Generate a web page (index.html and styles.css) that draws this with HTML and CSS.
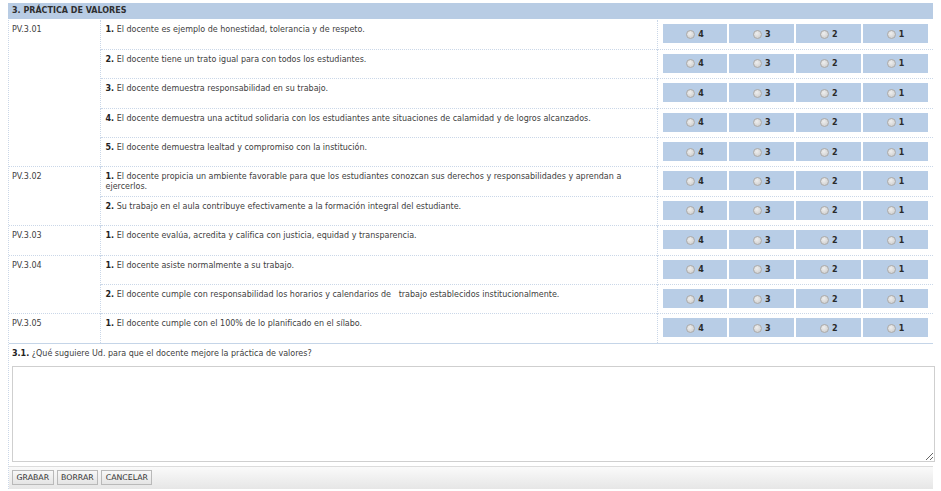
FILE: index.html
```html
<!DOCTYPE html>
<html lang="es">
<head>
<meta charset="utf-8">
<title>Práctica de valores</title>
<link rel="stylesheet" href="styles.css">
</head>
<body>
<div class="panel">
  <div class="head">3. PRÁCTICA DE VALORES</div>
  <table class="grid">
    <colgroup><col class="c-code"><col class="c-q"><col class="c-r"></colgroup>
    <tbody>
      <tr class="grp"><td class="code" rowspan="5">PV.3.01</td><td class="q"><b>1.</b> El docente es ejemplo de honestidad, tolerancia y de respeto.</td><td class="r"><div class="opts"><span class="opt"><i></i>4</span><span class="opt"><i></i>3</span><span class="opt"><i></i>2</span><span class="opt"><i></i>1</span></div></td></tr>
      <tr><td class="q"><b>2.</b> El docente tiene un trato igual para con todos los estudiantes.</td><td class="r"><div class="opts"><span class="opt"><i></i>4</span><span class="opt"><i></i>3</span><span class="opt"><i></i>2</span><span class="opt"><i></i>1</span></div></td></tr>
      <tr><td class="q"><b>3.</b> El docente demuestra responsabilidad en su trabajo.</td><td class="r"><div class="opts"><span class="opt"><i></i>4</span><span class="opt"><i></i>3</span><span class="opt"><i></i>2</span><span class="opt"><i></i>1</span></div></td></tr>
      <tr><td class="q"><b>4.</b> El docente demuestra una actitud solidaria con los estudiantes ante situaciones de calamidad y de logros alcanzados.</td><td class="r"><div class="opts"><span class="opt"><i></i>4</span><span class="opt"><i></i>3</span><span class="opt"><i></i>2</span><span class="opt"><i></i>1</span></div></td></tr>
      <tr><td class="q"><b>5.</b> El docente demuestra lealtad y compromiso con la institución.</td><td class="r"><div class="opts"><span class="opt"><i></i>4</span><span class="opt"><i></i>3</span><span class="opt"><i></i>2</span><span class="opt"><i></i>1</span></div></td></tr>
      <tr class="grp"><td class="code" rowspan="2">PV.3.02</td><td class="q"><b>1.</b> El docente propicia un ambiente favorable para que los estudiantes conozcan sus derechos y responsabilidades y aprendan a<br>ejercerlos.</td><td class="r"><div class="opts"><span class="opt"><i></i>4</span><span class="opt"><i></i>3</span><span class="opt"><i></i>2</span><span class="opt"><i></i>1</span></div></td></tr>
      <tr><td class="q"><b>2.</b> Su trabajo en el aula contribuye efectivamente a la formación integral del estudiante.</td><td class="r"><div class="opts"><span class="opt"><i></i>4</span><span class="opt"><i></i>3</span><span class="opt"><i></i>2</span><span class="opt"><i></i>1</span></div></td></tr>
      <tr class="grp"><td class="code">PV.3.03</td><td class="q"><b>1.</b> El docente evalúa, acredita y califica con justicia, equidad y transparencia.</td><td class="r"><div class="opts"><span class="opt"><i></i>4</span><span class="opt"><i></i>3</span><span class="opt"><i></i>2</span><span class="opt"><i></i>1</span></div></td></tr>
      <tr class="grp"><td class="code" rowspan="2">PV.3.04</td><td class="q"><b>1.</b> El docente asiste normalmente a su trabajo.</td><td class="r"><div class="opts"><span class="opt"><i></i>4</span><span class="opt"><i></i>3</span><span class="opt"><i></i>2</span><span class="opt"><i></i>1</span></div></td></tr>
      <tr><td class="q"><b>2.</b> El docente cumple con responsabilidad los horarios y calendarios de &nbsp; trabajo establecidos institucionalmente.</td><td class="r"><div class="opts"><span class="opt"><i></i>4</span><span class="opt"><i></i>3</span><span class="opt"><i></i>2</span><span class="opt"><i></i>1</span></div></td></tr>
      <tr class="grp"><td class="code">PV.3.05</td><td class="q"><b>1.</b> El docente cumple con el 100% de lo planificado en el sílabo.</td><td class="r"><div class="opts"><span class="opt"><i></i>4</span><span class="opt"><i></i>3</span><span class="opt"><i></i>2</span><span class="opt"><i></i>1</span></div></td></tr>
    </tbody>
  </table>
  <div class="suggest">
    <p class="s-label"><b>3.1.</b> ¿Qué suguiere Ud. para que el docente mejore la práctica de valores?</p>
    <textarea class="s-text"></textarea>
  </div>
  <div class="bar">
    <button class="btn">GRABAR</button>
    <button class="btn">BORRAR</button>
    <button class="btn">CANCELAR</button>
  </div>
</div>
</body>
</html>
```
FILE: styles.css
```css
html, body { margin: 0; padding: 0; background: #fff; }
body { padding: 3px 8px 0 8px; font-family: "DejaVu Sans", Verdana, sans-serif; font-size: 8px; color: #404040; }

.panel { width: 925px; box-sizing: border-box; border-left: 1px dotted #cad7e8; }

.head {
  height: 16px; line-height: 16px; background: #b8cce4;
  padding-left: 4px; font-weight: bold; color: #2f2f2f; font-size: 8px;
  margin-left: -1px;
}

.grid { width: 924px; border-collapse: collapse; table-layout: fixed; margin-top: 1px; }
.c-code { width: 91px; }
.c-q { width: 557px; }
.c-r { width: 276px; }

.grid td { vertical-align: top; height: 29.4px; padding: 0; box-sizing: border-box; }
.grid tr + tr td { border-top: 1px dotted #cad7e8; }

.code { padding: 5px 0 0 3px !important; border-right: 1px dotted #cad7e8; }
.q { padding: 5px 6px 0 5px !important; border-right: 1px dotted #cad7e8; line-height: 10px; }
.q b { color: #222; }
.r { padding: 4px 5px 0 5px !important; }

.opts { display: grid; grid-template-columns: repeat(4, 1fr); column-gap: 2px; height: 19px; }
.opt {
  background: #b8cde6; display: flex; align-items: center; justify-content: center;
  font-weight: bold; color: #2a2a2a; font-size: 8px; gap: 3px; padding-top: 1px; box-sizing: border-box;
}
.opt i {
  width: 9px; height: 9px; border-radius: 50%; box-sizing: border-box;
  border: 1px solid #a9a9a9; background: radial-gradient(circle at 40% 35%, #eeeeee, #c9c9c9);
  display: inline-block;
}

.suggest { border-top: 1px solid #c5d5e8; padding: 0 0 0 3px; }
.s-label { margin: 0; padding: 5px 0 0 0; height: 18px; box-sizing: border-box; line-height: 10px; }
.s-label b { color: #222; }
.s-text {
  display: block; width: 923px; height: 96px; margin: 4px 0 0 0; box-sizing: border-box;
  border: 1px solid #cfcfcf; background: #fff; resize: both; font-family: inherit;
}

.bar {
  margin-top: 4px; border-top: 1px solid #dcdcdc; height: 23px; box-sizing: border-box;
  background: linear-gradient(#fafafa, #e6e6e6); padding: 3px 0 0 3px;
  display: flex; gap: 3px; align-items: flex-start;
}
.btn {
  height: 15px; padding: 0 3.5px; margin: 0; font-family: "DejaVu Sans", sans-serif; font-size: 7.8px;
  color: #333; border: 1px solid #b9b9b9; background: linear-gradient(#f8f8f8, #e4e4e4);
  line-height: 13px;
}
```
